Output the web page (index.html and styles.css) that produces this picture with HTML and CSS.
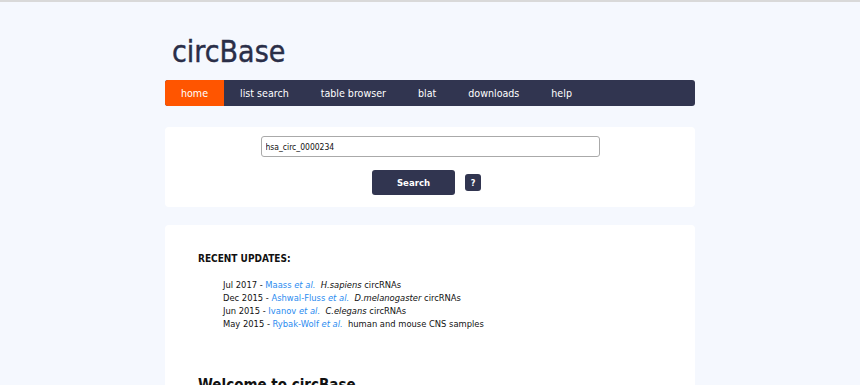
FILE: index.html
```html
<!DOCTYPE html>
<html lang="en">
<head>
  <meta charset="UTF-8" />
  <title>circBase</title>
  <link rel="stylesheet" href="styles.css">
</head>
<body>
  <div class="page">
    <h1 class="logo">circBase</h1>
    <nav class="menu">
      <a class="active" href="#">home</a>
      <a href="#">list search</a>
      <a href="#">table browser</a>
      <a href="#">blat</a>
      <a href="#">downloads</a>
      <a href="#">help</a>
    </nav>

    <div class="box search-box">
      <input class="search-input" type="text" value="hsa_circ_0000234">
      <div class="search-buttons">
        <button class="btn-search">Search</button>
        <button class="btn-help">?</button>
      </div>
    </div>

    <div class="box content">
      <h3>RECENT UPDATES:</h3>
      <ul class="updates">
        <li>Jul 2017 - <a href="#">Maass <i>et al.</i></a>&nbsp; <i>H.sapiens</i> circRNAs</li>
        <li>Dec 2015 - <a href="#">Ashwal-Fluss <i>et al.</i></a>&nbsp; <i>D.melanogaster</i> circRNAs</li>
        <li>Jun 2015 - <a href="#">Ivanov <i>et al.</i></a>&nbsp; <i>C.elegans</i> circRNAs</li>
        <li>May 2015 - <a href="#">Rybak-Wolf <i>et al.</i></a>&nbsp; human and mouse CNS samples</li>
      </ul>
      <h2>Welcome to circBase</h2>
    </div>
  </div>
</body>
</html>
```

FILE: styles.css
```css
body {
  margin: 0;
  font-family: 'DejaVu Sans Condensed', 'DejaVu Sans', sans-serif;
  font-stretch: condensed;
  background-color: #f5f8fe;
  border-top: 2px solid #d9d9d9;
  color: #111;
}

.page {
  width: 530px;
  margin: 0 auto;
}

.logo {
  margin: 0;
  padding: 32px 0 0 7px;
  height: 46px;
  font-size: 30px;
  font-weight: normal;
  color: #2a2e48;
  -webkit-text-stroke: 0.4px #2a2e48;
}

.menu {
  display: flex;
  height: 26px;
  background: #313550;
  border-radius: 3px;
  overflow: hidden;
}

.menu a {
  display: flex;
  align-items: center;
  padding: 0 16px;
  color: #fff;
  font-size: 10.6px;
  text-decoration: none;
}

.menu a.active {
  background: #ff5500;
}

.box {
  background: #fff;
  border-radius: 4px;
}

.search-box {
  margin-top: 21px;
  height: 80px;
  display: flex;
  flex-direction: column;
  align-items: center;
  padding-top: 9px;
  box-sizing: border-box;
}

.search-input {
  width: 339px;
  height: 21px;
  box-sizing: border-box;
  border: 1px solid #aaa;
  border-radius: 3px;
  font-family: inherit;
  font-stretch: condensed;
  font-size: 8.5px;
  padding: 0 4px;
  color: #111;
}

.search-buttons {
  display: flex;
  align-items: center;
  gap: 10px;
  margin-top: 13px;
  margin-left: -7px;
}

.btn-search {
  width: 83px;
  height: 25px;
  background: #313550;
  color: #fff;
  border: none;
  border-radius: 3px;
  font-family: inherit;
  font-stretch: condensed;
  font-weight: bold;
  font-size: 9.5px;
}

.btn-help {
  width: 16px;
  height: 17px;
  padding: 0;
  background: #313550;
  color: #fff;
  border: none;
  border-radius: 3px;
  font-family: inherit;
  font-stretch: condensed;
  font-weight: bold;
  font-size: 9px;
}

.content {
  margin-top: 18px;
  padding: 28px 33px;
}

.content h3 {
  margin: 0;
  font-size: 10px;
  font-weight: bold;
}

.updates {
  list-style: none;
  margin: 14px 0 0 25px;
  padding: 0;
  font-size: 9.3px;
  line-height: 13px;
}

.updates a {
  color: #2b8cf0;
  text-decoration: none;
}

.content h2 {
  margin: 46px 0 0;
  font-size: 15px;
}
```
